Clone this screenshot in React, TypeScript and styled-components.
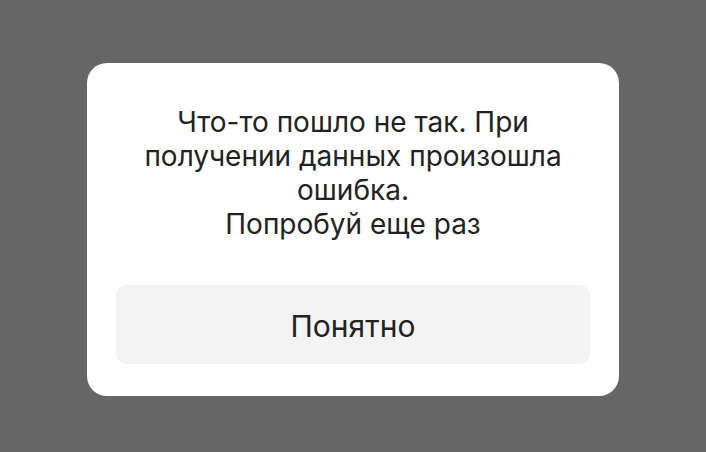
import React from 'react';
import styled, { createGlobalStyle } from 'styled-components';

const GlobalStyle = createGlobalStyle`
    html, body {
        margin: 0;
        padding: 0;
        background: #666666;
    }
    body {
        font-family: Inter, "Noto Sans", sans-serif;
    }
`;

export default function App() {
    return (
        <>
            <GlobalStyle />
            <Overlay>
                <Dialog>
                    <Message>
                        Что-то пошло не так. При
                        <br />
                        получении данных произошла
                        <br />
                        ошибка.
                        <br />
                        Попробуй еще раз
                    </Message>
                    <ConfirmButton type="button">Понятно</ConfirmButton>
                </Dialog>
            </Overlay>
        </>
    );
}

const Overlay = styled.div`
    width: 706px;
    height: 452px;
    box-sizing: border-box;
    padding: 63px 87px 56px;
    display: flex;
    align-items: flex-start;
    justify-content: center;
`;

const Dialog = styled.div`
    width: 532px;
    height: 333px;
    box-sizing: border-box;
    padding: 42px 29px 32px;
    background: #ffffff;
    border-radius: 20px;
    display: flex;
    flex-direction: column;
    justify-content: space-between;
`;

const Message = styled.p`
    margin: 0;
    text-align: center;
    font-size: 28px;
    line-height: 34px;
    color: #222222;
`;

const ConfirmButton = styled.button`
    height: 79px;
    width: 100%;
    padding: 2px 0 0;
    border: none;
    border-radius: 10px;
    background: #f3f3f3;
    font-family: Inter, "Noto Sans", sans-serif;
    font-size: 30px;
    color: #222222;
    cursor: pointer;
`;
